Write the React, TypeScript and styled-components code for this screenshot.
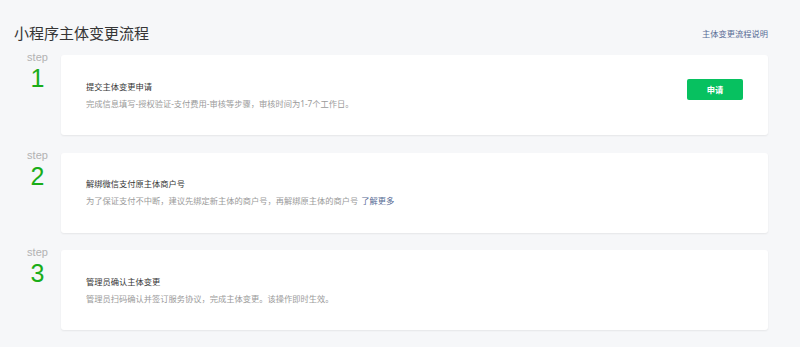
import styled, { createGlobalStyle } from 'styled-components';

const GlobalStyle = createGlobalStyle`
  html, body {
    margin: 0;
    padding: 0;
    background: #f6f7f9;
    font-family: 'Noto Sans', 'Noto Sans CJK SC', sans-serif;
  }
`;

const Page = styled.div`
  width: 800px;
  box-sizing: border-box;
  padding: 18px 32px 16px 14px;
`;
const Header = styled.div`
  display: flex;
  align-items: center;
  justify-content: space-between;
  height: 30px;
  margin-bottom: 7px;
`;
const Title = styled.h2`
  margin: 0;
  font-size: 15px;
  font-weight: 400;
  color: #353535;
  line-height: 30px;
`;
const HeaderLink = styled.a`
  font-size: 8.25px;
  color: #576b95;
  text-decoration: none;
  cursor: pointer;
`;
const StepList = styled.div`
  display: flex;
  flex-direction: column;
  gap: 17.5px;
`;
const StepRow = styled.div`
  display: flex;
`;
const StepMarker = styled.div`
  width: 47px;
  flex-shrink: 0;
  margin-top: -4px;
  text-align: center;
  font-family: 'Liberation Sans', Arial, sans-serif;
  span {
    display: block;
    font-size: 11px;
    line-height: 13px;
    color: #b2b2b2;
  }
  strong {
    display: block;
    font-size: 25px;
    line-height: 28px;
    font-weight: 400;
    color: #1aad19;
  }
`;
const Card = styled.div`
  flex: 1;
  height: 80px;
  box-sizing: border-box;
  padding: 0 25px;
  display: flex;
  align-items: center;
  justify-content: space-between;
  background: #fff;
  border-radius: 3px;
  box-shadow: 0 1px 2px rgba(0, 0, 0, 0.07);
`;
const CardBody = styled.div`
  display: flex;
  flex-direction: column;
  gap: 5px;
`;
const CardTitle = styled.div`
  font-size: 8.25px;
  line-height: 12px;
  color: #353535;
`;
const CardDesc = styled.div`
  font-size: 8.25px;
  line-height: 12px;
  color: #9a9a9a;
  a {
    color: #576b95;
    text-decoration: none;
    margin-left: 3px;
  }
`;
const ApplyButton = styled.button`
  width: 56px;
  height: 21px;
  margin-bottom: 12px;
  border: 0;
  border-radius: 2px;
  background: #07c160;
  color: #fff;
  font-family: inherit;
  font-size: 8.25px;
  font-weight: 700;
  cursor: pointer;
`;

type Step = {
  title: string;
  desc: string;
  more?: string;
  action?: string;
};

const steps: Step[] = [
  {
    title: '提交主体变更申请',
    desc: '完成信息填写-授权验证-支付费用-审核等步骤，审核时间为1-7个工作日。',
    action: '申请',
  },
  {
    title: '解绑微信支付原主体商户号',
    desc: '为了保证支付不中断，建议先绑定新主体的商户号，再解绑原主体的商户号',
    more: '了解更多',
  },
  {
    title: '管理员确认主体变更',
    desc: '管理员扫码确认并签订服务协议，完成主体变更。该操作即时生效。',
  },
];

export default function App() {
  return (
    <>
      <GlobalStyle />
      <Page>
        <Header>
          <Title>小程序主体变更流程</Title>
          <HeaderLink>主体变更流程说明</HeaderLink>
        </Header>
        <StepList>
          {steps.map((s, i) => (
            <StepRow key={s.title}>
              <StepMarker>
                <span>step</span>
                <strong>{i + 1}</strong>
              </StepMarker>
              <Card>
                <CardBody>
                  <CardTitle>{s.title}</CardTitle>
                  <CardDesc>
                    {s.desc}
                    {s.more && <a>{s.more}</a>}
                  </CardDesc>
                </CardBody>
                {s.action && <ApplyButton>{s.action}</ApplyButton>}
              </Card>
            </StepRow>
          ))}
        </StepList>
      </Page>
    </>
  );
}
